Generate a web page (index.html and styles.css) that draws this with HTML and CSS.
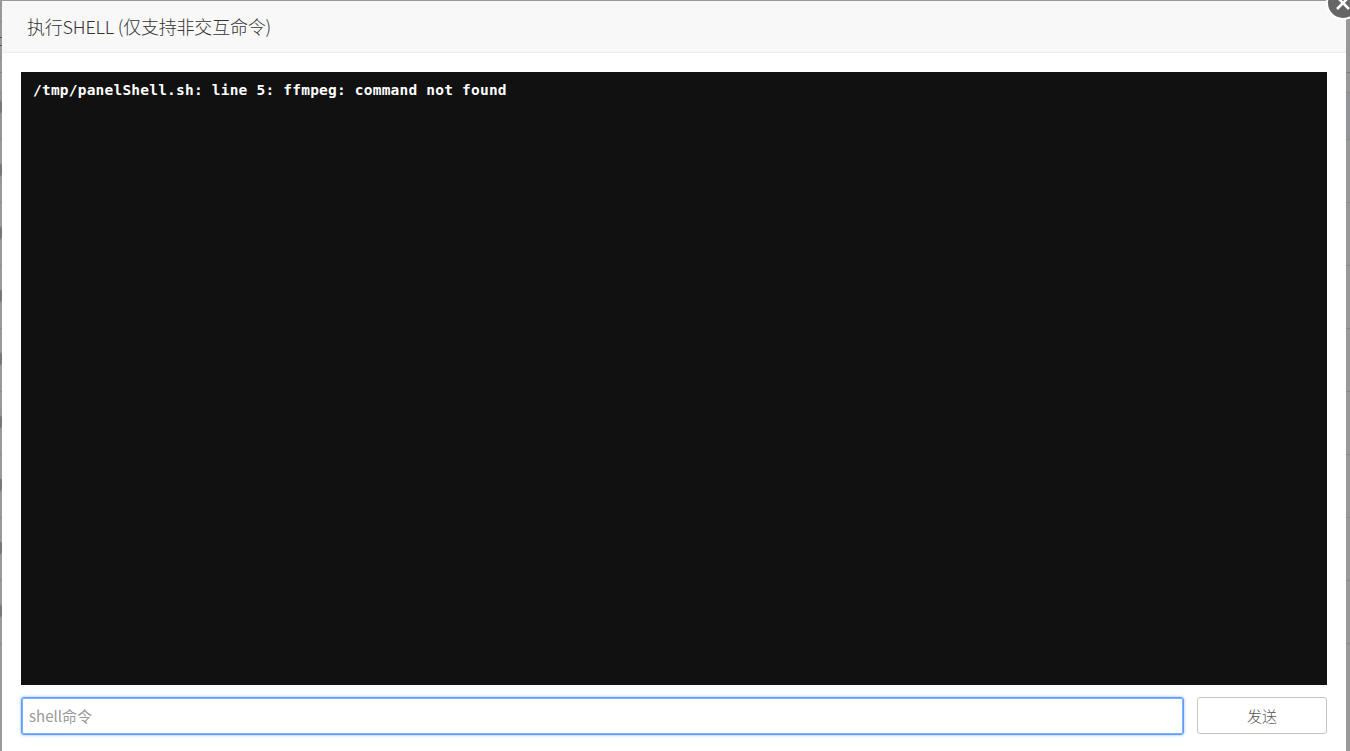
FILE: index.html
```html
<!DOCTYPE html>
<html lang="zh">
<head>
<meta charset="utf-8">
<title>执行SHELL</title>
<link rel="stylesheet" href="styles.css">
</head>
<body>
<div class="page">
  <div class="head-lines"></div>
  <div class="row row-first"><i class="dot"></i></div>
  <div class="row"><i class="dot"></i></div>
  <div class="row"><i class="dot"></i></div>
  <div class="row"><i class="dot"></i></div>
  <div class="row"><i class="dot"></i></div>
  <div class="row"><i class="dot"></i></div>
  <div class="row"><i class="dot"></i></div>
  <div class="row"><i class="dot"></i></div>
  <div class="row"><i class="dot"></i></div>
</div>
<div class="modal">
  <header class="modal-title">执行SHELL (仅支持非交互命令)</header>
  <div class="modal-body">
    <pre class="terminal">/tmp/panelShell.sh: line 5: ffmpeg: command not found</pre>
    <div class="cmd-row">
      <input class="cmd-input" type="text" placeholder="shell命令">
      <button class="send-btn" type="button">发送</button>
    </div>
  </div>
</div>
<button class="close-btn" type="button" aria-label="关闭">
  <svg width="16" height="16" viewBox="0 0 16 16"><path d="M2 2 14 14M14 2 2 14" stroke="#fff" stroke-width="2.6" fill="none"/></svg>
</button>
</body>
</html>
```
FILE: styles.css
```css
* { box-sizing: border-box; }
html, body { margin: 0; height: 751px; overflow: hidden; }
body {
  position: relative;
  background: #999;
  font-family: "Noto Sans CJK SC", "Liberation Sans", sans-serif;
}
.page { height: 751px; overflow: hidden; }
.head-lines {
  height: 77px;
  background:
    linear-gradient(#8a8a8a, #8a8a8a) 0 21px / 50% 1px no-repeat,
    linear-gradient(#555, #555) 0 37px / 50% 1px no-repeat,
    linear-gradient(#555, #555) 0 45px / 50% 1px no-repeat,
    linear-gradient(#8a8a8a, #8a8a8a) 0 57px / 50% 1px no-repeat,
    linear-gradient(#808080, #808080) 0 72px / 100% 1px no-repeat;
}
.row {
  position: relative;
  height: 63px;
  border-bottom: 1px solid #8a8a8a;
}
.row-first {
  background:
    linear-gradient(#8a8a8a, #8a8a8a) 0 15px / 100% 1px no-repeat,
    linear-gradient(#93959a, #93959a) 0 16px / 100% 100% no-repeat;
}
.dot {
  position: absolute;
  left: -6px;
  top: 23px;
  width: 8px;
  height: 14px;
  border-radius: 4px;
  background: #777;
}
.modal {
  position: absolute;
  left: 2px;
  top: 1px;
  width: 1344px;
  height: 760px;
  background: #fff;
}
.modal-title {
  height: 52px;
  padding-left: 25px;
  line-height: 51px;
  font-size: 18px;
  font-weight: 300;
  letter-spacing: -0.2px;
  color: #333;
  background: #f8f8f8;
  border-bottom: 1px solid #eee;
}
.modal-body { padding: 19px 19px 0; }
.terminal {
  height: 613px;
  margin: 0;
  padding: 9px 12px;
  background: #111;
  color: #fff;
  font-family: "DejaVu Sans Mono", monospace;
  font-size: 14.5px;
  font-weight: 700;
  line-height: 18px;
  letter-spacing: 0.21px;
}
.cmd-row {
  display: flex;
  justify-content: space-between;
  margin-top: 12px;
}
.cmd-input {
  width: 1163px;
  height: 38px;
  padding: 0 7px 2px;
  border: 1px solid #5e9ef8;
  border-radius: 3px;
  outline: none;
  box-shadow: inset 0 0 0 1px #7fb2fa, 0 0 3px rgba(64, 140, 255, .6);
  font: 400 15px "Noto Sans CJK SC", "Liberation Sans", sans-serif;
  color: #333;
}
.cmd-input::placeholder { color: #999; opacity: 1; }
.send-btn {
  width: 130px;
  height: 37px;
  padding: 0;
  border: 1px solid #c4c4c4;
  border-radius: 3px;
  background: #fff;
  font: 300 15px "Noto Sans CJK SC", "Liberation Sans", sans-serif;
  color: #555;
}
.close-btn {
  position: absolute;
  left: 1326px;
  top: -14px;
  width: 34px;
  height: 34px;
  padding: 0;
  display: flex;
  align-items: center;
  justify-content: center;
  border: 2px solid #fff;
  border-radius: 50%;
  background: #666;
}
```
